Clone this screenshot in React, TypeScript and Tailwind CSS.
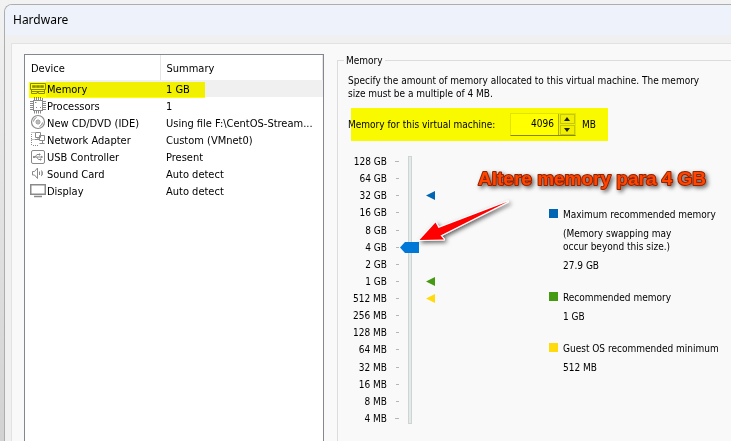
import { useState, type ReactNode } from "react";

const line = "#8a8a8a";

function Icon({ children }: { children: ReactNode }) {
  return (
    <svg width="16" height="17" viewBox="0 0 16 17" fill="none" stroke={line} className="shrink-0" aria-hidden="true">
      {children}
    </svg>
  );
}

const icons = {
  memory: (
    <Icon>
      <path d="M.5 3.5h15v6H.5zM1.500 9.500v4h5.500v-1h1.500v1h6V9.500" />
      <path d="M2.500 5.500h3v2h-3zM6.500 5.500h3v2h-3zM10.500 5.500h3v2h-3z" fill={line} strokeWidth=".6" />
      <path d="M2 11.500h12" />
    </Icon>
  ),
  cpu: (
    <Icon>
      <rect x="3.500" y="3.500" width="9" height="10" />
      <path d="M4.500 0v3M6.500 0v3M8.500 0v3M10.500 0v3M12.500 1v2M4.500 14v2.500M6.500 14v2.500M8.500 14v2.500M10.500 14v2.500M0 4.500h3M0 6.500h3M0 8.500h3M0 10.500h3M0 12.500h3M13 4.500h3M13 6.500h3M13 8.500h3M13 10.500h3M13 12.500h3" />
      <path d="M5 5.500h1.500M10 10.500h1M6 10.500h1" />
    </Icon>
  ),
  disc: (
    <Icon>
      <circle cx="8" cy="8" r="6.500" strokeWidth="1.200" />
      <circle cx="8" cy="8" r="2" />
      <circle cx="8" cy="8" r=".5" />
      <path d="M3.500 7.500a4.500 4.500 0 0 1 3-4M12.500 8.500a4.500 4.500 0 0 1-3 4" />
    </Icon>
  ),
  network: (
    <Icon>
      <path d="M5.500 1.500h5v5h-5zM9.500 4.500h5v5h-5z" fill="#fff" />
      <path d="M5 8.500h4M8 6.500v2M12.500 10v2M9.500 12.500h5" />
      <path d="M1.500 1.500h3M1.500 3v11M3 14.500h6M1.500 8.500h3" strokeDasharray="1 1" />
    </Icon>
  ),
  usb: (
    <Icon>
      <rect x="1.500" y="2.500" width="13" height="13" rx="1.500" />
      <path d="M3 9h9M5 9l2-2.500h2M6.500 9l2 2.500h1.500" />
      <circle cx="4" cy="9" r=".7" fill={line} />
      <path d="M9 6h1v1H9zM10 11h1v1h-1zM11.500 8.300l1 .7-1 .7z" fill={line} />
    </Icon>
  ),
  sound: (
    <Icon>
      <path d="M2.500 6.500h2l3-3.500v10.500l-3-3.500h-2z" />
      <path d="M9.500 6.500v3.500M11 5.500c1.800 0 1.800 5.500 0 5.500M12 6.500v3.500" />
    </Icon>
  ),
  display: (
    <Icon>
      <rect x=".75" y="2.750" width="14.500" height="9.500" strokeWidth="1.500" />
      <path d="M4 14.500h8" strokeWidth="1.500" />
    </Icon>
  ),
};

const devices = [
  { icon: icons.memory, name: "Memory", summary: "1 GB" },
  { icon: icons.cpu, name: "Processors", summary: "1" },
  { icon: icons.disc, name: "New CD/DVD (IDE)", summary: "Using file F:\\CentOS-Stream..." },
  { icon: icons.network, name: "Network Adapter", summary: "Custom (VMnet0)" },
  { icon: icons.usb, name: "USB Controller", summary: "Present" },
  { icon: icons.sound, name: "Sound Card", summary: "Auto detect" },
  { icon: icons.display, name: "Display", summary: "Auto detect" },
];

const sizes = [
  "128 GB", "64 GB", "32 GB", "16 GB", "8 GB", "4 GB", "2 GB", "1 GB",
  "512 MB", "256 MB", "128 MB", "64 MB", "32 MB", "16 MB", "8 MB", "4 MB",
];

function DeviceList() {
  return (
    <section className="relative w-[300px] shrink-0 border border-b-0 border-[#828790] bg-white text-[11px]">
      <table className="w-full table-fixed border-collapse text-left">
        <thead>
          <tr className="h-[25px]">
            <th className="w-[135px] border-r border-[#e5e5e5] p-0 pl-[6px] pt-[2px] font-normal">Device</th>
            <th className="border-r border-[#e5e5e5] p-0 pl-[6px] pt-[2px] font-normal">Summary</th>
          </tr>
        </thead>
        <tbody>
          {devices.map((d, i) => (
            <tr key={d.name} className="h-[17px]">
              <td className="p-0 pl-[5px]">
                <div className="flex h-[17px] items-center">
                  {d.icon}
                  <span className={i === 0 ? "h-[17px] grow bg-[#f0f0f0] pl-px pt-[2px] leading-[15px]" : "pl-px pt-[2px] leading-[15px]"}>{d.name}</span>
                </div>
              </td>
              <td className={i === 0 ? "truncate bg-[#f0f0f0] p-0 pl-[6px] pt-[2px] leading-[15px]" : "truncate p-0 pl-[6px] pt-[2px] leading-[15px]"}>
                {d.summary}
              </td>
            </tr>
          ))}
        </tbody>
      </table>
      <div className="pointer-events-none absolute left-1 top-[27px] h-4 w-[176px] bg-[#ffff00] mix-blend-multiply" />
    </section>
  );
}

function MemoryField() {
  const [value, setValue] = useState(4096);
  const step = "flex h-[10px] w-[15px] items-center justify-center border border-[#c8c8c8] bg-[#f0f0f0]";
  return (
    <div className="relative mt-2 flex h-[33px] items-center">
      <label htmlFor="mem" className="w-[162px] whitespace-nowrap">
        Memory for this virtual machine:
      </label>
      <div className="flex h-[23px] w-[66px] border border-[#e3e3e3] border-b-[#868686] bg-white">
        <input
          id="mem"
          value={value}
          onChange={(e) => setValue(Number(e.target.value) || 0)}
          className="w-0 grow bg-transparent pb-[2px] pr-1 text-right outline-none"
        />
        <div className="flex w-[17px] flex-col items-center justify-between border-l border-[#adadad] bg-[#f0f0f0]">
          <button type="button" aria-label="Increase" className={step} onClick={() => setValue(value + 4)}>
            <svg width="6" height="4" viewBox="0 0 6 4"><path d="M0 4l3-4 3 4z" fill="#222" /></svg>
          </button>
          <button type="button" aria-label="Decrease" className={step} onClick={() => setValue(value - 4)}>
            <svg width="6" height="4" viewBox="0 0 6 4"><path d="M0 0l3 4 3-4z" fill="#222" /></svg>
          </button>
        </div>
      </div>
      <span className="pl-[6px]">MB</span>
      <div className="pointer-events-none absolute inset-y-0 left-[3px] w-[257px] bg-[#ffff00] mix-blend-multiply" />
    </div>
  );
}

function Marker({ color }: { color: string }) {
  return (
    <svg width="9" height="9" viewBox="0 0 9 9" aria-hidden="true">
      <path d="M0 4.500L9 0v9z" fill={color} />
    </svg>
  );
}

const markers: Record<string, string> = { "32 GB": "#0066b3", "1 GB": "#449a10", "512 MB": "#ffdb0d" };

function Scale() {
  const [level, setLevel] = useState(10);
  return (
    <div className="relative h-[274px] w-[87px] shrink-0">
      <ul className="flex h-full flex-col justify-between">
        {sizes.map((s, i) => (
          <li key={s} className="flex h-[17px] items-center">
            <span className="w-[39px] whitespace-nowrap text-right">{s}</span>
            <span className="flex w-3 justify-end">
              <span className={i === 0 || i === 15 ? "h-px w-1 bg-[#b5b5b5]" : "h-px w-[3px] bg-[#b5b5b5]"} />
            </span>
            <span className="flex grow justify-end">{markers[s] && <Marker color={markers[s]} />}</span>
          </li>
        ))}
      </ul>
      <input
        type="range"
        aria-label="Memory size"
        min={0}
        max={15}
        value={level}
        onChange={(e) => setLevel(Number(e.target.value))}
        className="absolute left-[60px] top-[3px] m-0 h-[268px] w-1 appearance-none border border-[#ced3d3] bg-[#e4e9e9] [direction:rtl] [writing-mode:vertical-lr] [&::-webkit-slider-thumb]:ml-[-1px] [&::-webkit-slider-thumb]:h-[11px] [&::-webkit-slider-thumb]:w-[19px] [&::-webkit-slider-thumb]:appearance-none [&::-webkit-slider-thumb]:bg-[#0078d7] [&::-webkit-slider-thumb]:[clip-path:polygon(0_50%,5px_0,100%_0,100%_100%,5px_100%)]"
      />
    </div>
  );
}

function LegendItem({ swatch, title, note, value }: { swatch: string; title: string; note?: ReactNode; value: string }) {
  return (
    <div className="flex gap-[5px]">
      <span className={`mt-px size-[9px] shrink-0 ${swatch}`} />
      <div className="flex flex-col gap-[6px] whitespace-nowrap">
        <dt>{title}</dt>
        {note && <dd>{note}</dd>}
        <dd>{value}</dd>
      </div>
    </div>
  );
}

function Callout() {
  return (
    <svg
      width="320"
      height="110"
      viewBox="410 160 320 110"
      className="pointer-events-none absolute left-[62px] top-[7px] overflow-visible"
    >
      <defs>
        <filter id="shade" x="-10%" y="-20%" width="130%" height="150%">
          <feDropShadow dx="2" dy="2" stdDeviation="2" floodColor="#000" floodOpacity="0.6" />
        </filter>
      </defs>
      <path
        d="M419.500 240L435.500 222.500L438.500 228L508 201.500L440.500 235.500L444 239.500z"
        fill="#ff0000"
        stroke="#fff"
        strokeWidth="2"
        paintOrder="stroke"
        strokeLinejoin="round"
        filter="url(#shade)"
      />
      <text
        x="478"
        y="185"
        fill="#ff4500"
        stroke="#8f2200"
        strokeWidth="2"
        strokeLinejoin="round"
        paintOrder="stroke"
        filter="url(#shade)"
        className="font-['Liberation_Sans',Arial,sans-serif] text-[19px] font-bold"
      >
        Altere memory para 4 GB
      </text>
    </svg>
  );
}

export default function App() {
  return (
    <div className="flex min-h-screen flex-col overflow-hidden bg-linear-to-b from-[#f2f2f2] to-[#d2d2d2] pl-1 pt-1 font-['DejaVu_Sans_Condensed','Noto_Sans',sans-serif] text-[10px] leading-[13px] text-black">
      <div className="flex grow flex-col overflow-hidden rounded-tl-lg border-l border-t border-[#adadad] bg-[#f0f0f0]">
        <header className="h-[30px] bg-[#eef3fb] pl-2 font-['Noto_Sans',sans-serif] text-xs leading-[30px]">
          <h1>Hardware</h1>
        </header>
        <main className="ml-[6px] mt-2 flex grow gap-[13px] border-l border-t border-[#e2e2e2] bg-[#f9f9f9] pl-3 pt-[10px]">
          <DeviceList />
          <fieldset className="mt-0 min-w-0 grow border-l border-t border-[#dcdcdc] pl-[10px]">
            <legend className="-ml-1 px-[2px]">Memory</legend>
            <p className="mt-[7px]">
              Specify the amount of memory allocated to this virtual machine. The memory
              <br />
              size must be a multiple of 4 MB.
            </p>
            <MemoryField />
            <div className="relative mt-3 flex">
              <Scale />
              <dl className="ml-[114px] mt-[55px] flex flex-col gap-[19px]">
                <LegendItem
                  swatch="bg-[#0066b3]"
                  title="Maximum recommended memory"
                  note={<>(Memory swapping may<br />occur beyond this size.)</>}
                  value="27.9 GB"
                />
                <LegendItem swatch="bg-[#449a10]" title="Recommended memory" value="1 GB" />
                <LegendItem swatch="bg-[#ffdb0d]" title="Guest OS recommended minimum" value="512 MB" />
              </dl>
              <Callout />
            </div>
          </fieldset>
        </main>
      </div>
    </div>
  );
}
